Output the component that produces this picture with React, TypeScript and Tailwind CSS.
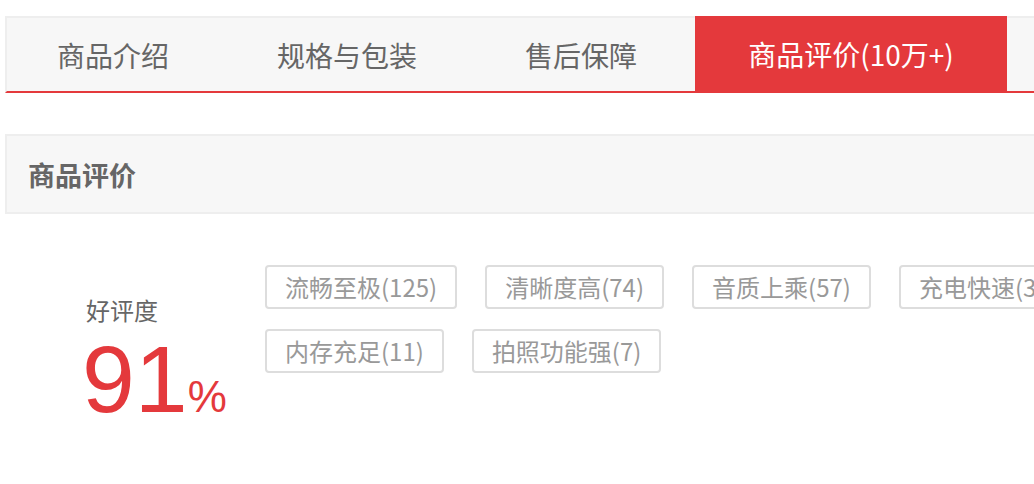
import React from 'react';

const tabs = ['商品介绍', '规格与包装', '售后保障', '商品评价(10万+)'];

const tags = [
  '流畅至极(125)',
  '清晰度高(74)',
  '音质上乘(57)',
  '充电快速(35)',
  '内存充足(11)',
  '拍照功能强(7)',
];

export default function App() {
  const active = 3;

  return (
    <div
      className="w-[1034px] h-[484px] overflow-hidden bg-white"
      style={{ fontFamily: '"Noto Sans CJK SC", "Liberation Sans", sans-serif' }}
    >
      <div className="w-[1300px] ml-[5px] pt-[16px]">
        {/* Tab bar */}
        <div className="flex gap-[8px] h-[77px] bg-[#f7f7f7] border-t-2 border-l-2 border-[#eeeeee] border-b-2 border-b-[#e4393c]">
          {tabs.map((tab, i) => (
            <div
              key={tab}
              className={
                i === active
                  ? '-mt-[2px] h-[75px] w-[312px] flex items-center justify-center bg-[#e4393c] text-white text-[28px] leading-none'
                  : 'h-[73px] px-[50px] flex items-center text-[#666666] text-[28px] leading-none'
              }
            >
              {tab}
            </div>
          ))}
        </div>

        {/* Section header */}
        <div className="mt-[41px] h-[80px] flex items-center pl-[21px] bg-[#f7f7f7] border-2 border-[#eeeeee]">
          <h2 className="text-[27px] font-bold text-[#666666] leading-none">商品评价</h2>
        </div>

        {/* Rating */}
        <div className="flex mt-[51px]">
          <div className="w-[260px] pl-[81px] pt-[33px] shrink-0">
            <div className="text-[24px] leading-none text-[#666666]">好评度</div>
            <div
              className="flex items-baseline text-[#e4393c] mt-[10px] -ml-[4px]"
              style={{ fontFamily: '"Liberation Sans", Arial, sans-serif' }}
            >
              <span className="text-[95px] leading-none">91</span>
              <span className="text-[44px] leading-none">%</span>
            </div>
          </div>

          <div className="flex flex-wrap gap-x-[28px] gap-y-[20px] w-[850px] shrink-0 content-start">
            {tags.map((tag) => (
              <span
                key={tag}
                className="h-[44px] px-[18px] flex items-center border-2 border-[#dddddd] rounded-[4px] text-[24px] leading-none text-[#999999]"
              >
                {tag}
              </span>
            ))}
          </div>
        </div>
      </div>
    </div>
  );
}
